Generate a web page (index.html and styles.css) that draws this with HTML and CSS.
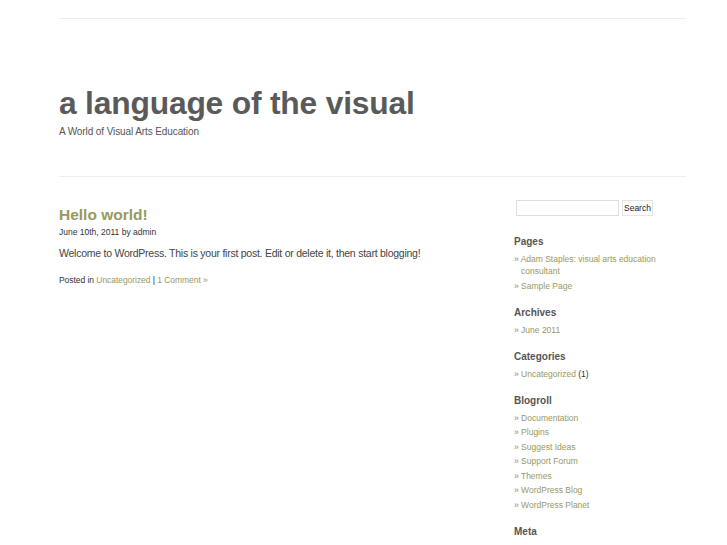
FILE: index.html
```html
<!DOCTYPE html>
<html>
<head>
<meta charset="utf-8">
<link rel="stylesheet" href="styles.css">
</head>
<body>
<div class="wrap">
  <div class="topline"></div>
  <header class="header">
    <h1 class="site-title">a language of the visual</h1>
    <div class="tagline">A World of Visual Arts Education</div>
  </header>
  <div class="main">
    <div class="content">
      <h2 class="post-title"><a href="#">Hello world!</a></h2>
      <div class="meta">June 10th, 2011 by admin</div>
      <p class="entry">Welcome to WordPress. This is your first post. Edit or delete it, then start blogging!</p>
      <div class="postmeta">Posted in <a href="#">Uncategorized</a> <span class="sep">|</span> <a href="#">1 Comment »</a></div>
    </div>
    <aside class="sidebar">
      <form class="search"><input class="search-input" type="text"><button class="search-btn" type="button">Search</button></form>
      <h3 class="widget-title">Pages</h3>
      <ul class="list">
        <li>» <a href="#">Adam Staples: visual arts education consultant</a></li>
        <li>» <a href="#">Sample Page</a></li>
      </ul>
      <h3 class="widget-title">Archives</h3>
      <ul class="list">
        <li>» <a href="#">June 2011</a></li>
      </ul>
      <h3 class="widget-title">Categories</h3>
      <ul class="list">
        <li>» <a href="#">Uncategorized</a> <span class="count">(1)</span></li>
      </ul>
      <h3 class="widget-title">Blogroll</h3>
      <ul class="list">
        <li>» <a href="#">Documentation</a></li>
        <li>» <a href="#">Plugins</a></li>
        <li>» <a href="#">Suggest Ideas</a></li>
        <li>» <a href="#">Support Forum</a></li>
        <li>» <a href="#">Themes</a></li>
        <li>» <a href="#">WordPress Blog</a></li>
        <li>» <a href="#">WordPress Planet</a></li>
      </ul>
      <h3 class="widget-title">Meta</h3>
    </aside>
  </div>
</div>
</body>
</html>
```
FILE: styles.css
```css
html, body { margin: 0; padding: 0; background: #fff; }
body { font-family: "Liberation Sans", Arial, sans-serif; color: #555; overflow: hidden; height: 545px; }
a { color: #99995e; text-decoration: none; }
.wrap { margin-left: 59px; width: 627px; }
.topline { height: 18px; border-bottom: 1px solid #eeeeee; }
.header { padding-top: 66px; height: 91px; border-bottom: 1px solid #eeeeee; }
.site-title { margin: 0; font-size: 31.8px; line-height: 36px; font-weight: bold; color: #5a5a5a; letter-spacing: -0.2px; }
.tagline { font-size: 10px; line-height: 14px; color: #555; letter-spacing: -0.1px; margin-top: 4px; }
.main { display: flex; }
.content { width: 455px; padding-top: 28px; }
.post-title { margin: 0; font-size: 15.5px; line-height: 20px; font-weight: bold; letter-spacing: 0; }
.post-title a { color: #99995e; }
.meta { font-size: 8.5px; line-height: 12px; color: #333; margin-top: 1px; }
.entry { font-size: 10.5px; line-height: 16px; color: #444; margin: 7px 0 0; letter-spacing: -0.25px; }
.postmeta { font-size: 8.5px; line-height: 12px; color: #333; margin-top: 13px; letter-spacing: -0.05px; }
.postmeta .sep { color: #222; }
.sidebar { width: 160px; padding-top: 23px; }
.search { display: flex; align-items: center; margin-left: 2px; gap: 3px; }
.search-input { width: 101px; height: 14px; border: 1px solid #ddd; padding: 0; margin: 0; }
.search-btn { height: 16px; padding: 0 1px; font-family: "Liberation Sans", Arial, sans-serif; font-size: 8.5px; color: #222; background: #fff; border: 1px solid #e5e5e5; margin: 0; }
.widget-title { font-size: 10px; line-height: 14px; font-weight: bold; color: #555; margin: 14px 0 4px; }
.sidebar .search + .widget-title { margin-top: 19px; }
.list { list-style: none; margin: 0; padding: 0; font-size: 8.5px; color: #888; }
.list li { padding-left: 7px; text-indent: -7px; line-height: 12px; margin-bottom: 2.5px; }
.list .count { color: #333; }
```
